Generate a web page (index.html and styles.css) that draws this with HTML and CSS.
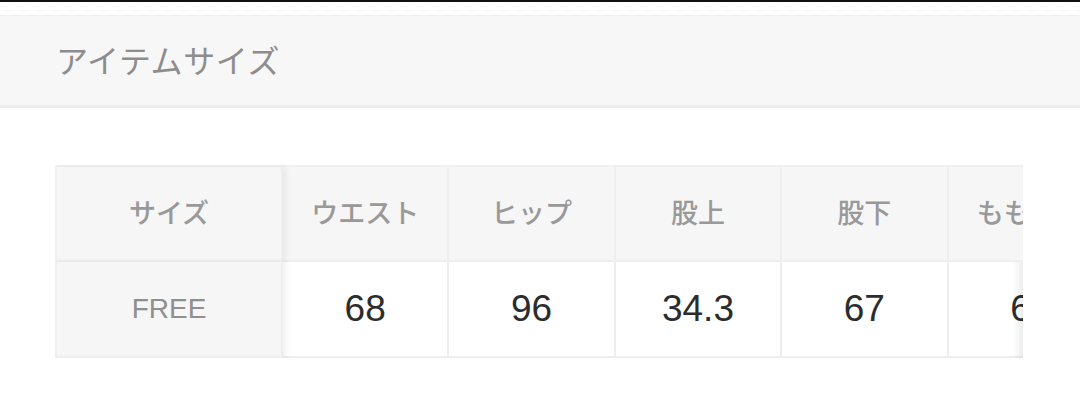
FILE: index.html
```html
<!DOCTYPE html>
<html lang="ja">
<head>
<meta charset="utf-8">
<link rel="stylesheet" href="styles.css">
</head>
<body>
<div class="topline"></div>
<div class="dashes"></div>
<header class="title-bar">アイテムサイズ</header>
<section class="table-wrap">
  <div class="size-table">
    <div class="row head">
      <div class="cell first">サイズ</div>
      <div class="cell">ウエスト</div>
      <div class="cell">ヒップ</div>
      <div class="cell">股上</div>
      <div class="cell">股下</div>
      <div class="cell">もも周り</div>
    </div>
    <div class="row data">
      <div class="cell first">FREE</div>
      <div class="cell">68</div>
      <div class="cell">96</div>
      <div class="cell">34.3</div>
      <div class="cell">67</div>
      <div class="cell">62</div>
    </div>
  </div>
</section>
</body>
</html>
```
FILE: styles.css
```css
html, body {
  margin: 0;
  padding: 0;
  background: #fff;
}
body {
  font-family: "Noto Sans CJK JP", "Noto Sans", sans-serif;
  width: 1080px;
  height: 405px;
  overflow: hidden;
}
.topline {
  height: 2px;
  background: #111;
}
.dashes {
  height: 13px;
  background: repeating-linear-gradient(90deg, #f2f2f2 0 8px, #fff 8px 16px) 0 4px / 100% 1px no-repeat,
              repeating-linear-gradient(90deg, #f4f4f4 0 8px, #fff 8px 16px) 4px 8px / 100% 1px no-repeat;
}
.title-bar {
  box-sizing: border-box;
  height: 93px;
  background: #f7f7f7;
  border-top: 1px solid #efefef;
  border-bottom: 3px solid #ebebeb;
  display: flex;
  align-items: center;
  padding-left: 56px;
  padding-bottom: 4px;
  font-size: 32px;
  color: #8d8d8d;
  letter-spacing: 0.6px;
}
.table-wrap {
  position: relative;
  margin: 57px 0 0 55px;
  width: 968px;
  overflow: hidden;
}
.table-wrap::after {
  content: "";
  position: absolute;
  top: 97px;
  right: 0;
  width: 10px;
  height: 96px;
  background: linear-gradient(90deg, rgba(0,0,0,0), rgba(0,0,0,0.07));
}
.size-table {
  display: flex;
  flex-direction: column;
  width: max-content;
  border-top: 2px solid #f0f0f0;
}
.row {
  display: flex;
}
.row.head {
  height: 95px;
}
.row.data {
  height: 96px;
}
.cell {
  box-sizing: border-box;
  width: 166.4px;
  flex: none;
  display: flex;
  align-items: center;
  justify-content: center;
  border-right: 2px solid #eeeeee;
  border-bottom: 2px solid #eeeeee;
}
.head .cell {
  background: #f6f6f6;
  font-size: 27px;
  font-weight: 500;
  color: #999999;
  padding-bottom: 4px;
}
.data .cell {
  background: #fff;
  font-family: "Liberation Sans", Arial, sans-serif;
  font-size: 37px;
  color: #2c2c2c;
  padding-bottom: 0;
}
.cell.first {
  width: 228px;
  position: relative;
  z-index: 1;
  border-left: 2px solid #f0f0f0;
  box-shadow: 3px 0 6px rgba(0, 0, 0, 0.06);
}
.data .cell.first {
  background: #f6f6f6;
  font-family: "Liberation Sans", Arial, sans-serif;
  font-size: 28px;
  color: #8f8f8f;
}
```
